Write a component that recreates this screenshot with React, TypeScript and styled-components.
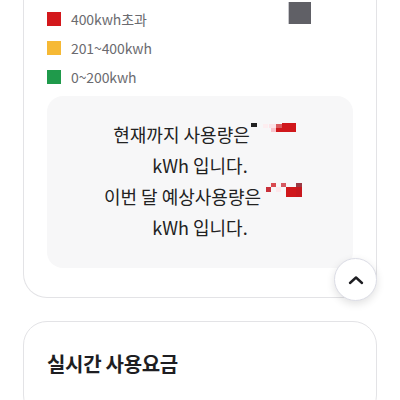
import React from "react";
import styled, { createGlobalStyle } from "styled-components";

const Global = createGlobalStyle`
  html, body { margin: 0; padding: 0; background: #fff; }
  body { font-family: "Noto Sans CJK KR", "Noto Sans", sans-serif; }
`;

const Page = styled.div`
  width: 400px;
  height: 400px;
  overflow: hidden;
  position: relative;
  background: #fff;
`;

const Card = styled.section<{ $top?: boolean }>`
  margin: 0 23px;
  box-sizing: border-box;
  border: 1px solid #e3e3e6;
  border-radius: 24px;
  background: #fff;
  position: relative;
  ${(p) =>
    p.$top
      ? `border-top: none; border-top-left-radius: 0; border-top-right-radius: 0; margin-top: -40px; padding: 49px 23px 29px;`
      : `margin-top: 23px; padding: 27px 23px 40px;`}
`;

const Legend = styled.ul`
  list-style: none;
  margin: 0;
  padding: 0;
  display: flex;
  flex-direction: column;
  gap: 9px;
`;

const LegendItem = styled.li`
  display: flex;
  align-items: center;
  gap: 10px;
  height: 20px;
  font-family: "Noto Sans CJK KR", sans-serif;
  font-size: 14px;
  color: #6b6b70;
  letter-spacing: -0.1px;
`;

const Swatch = styled.span<{ $c: string }>`
  width: 14px;
  height: 14px;
  background: ${(p) => p.$c};
`;

const GreySquare = styled.span`
  position: absolute;
  left: 264px;
  top: 42px;
  width: 22px;
  height: 22px;
  background: #606066;
  border-left: 1px solid #c8c8cc;
`;

const Info = styled.div`
  margin-top: 9px;
  background: #f7f7f8;
  border-radius: 16px;
  height: 172px;
  display: flex;
  flex-direction: column;
  align-items: center;
  justify-content: center;
  padding-bottom: 4px;
  box-sizing: border-box;
`;

const Line = styled.p<{ $indent?: number }>`
  margin: 0;
  height: 31px;
  display: flex;
  align-items: center;
  font-size: 18px;
  color: #222;
  white-space: nowrap;
  padding-left: ${(p) => p.$indent ?? 0}px;
`;

const TopButton = styled.button`
  position: absolute;
  right: -1px;
  bottom: -4px;
  width: 43px;
  height: 43px;
  border-radius: 50%;
  border: 1px solid #dcdde6;
  background: #fff;
  box-shadow: 0 3px 8px rgba(0, 0, 0, 0.12);
  display: flex;
  align-items: center;
  justify-content: center;
  padding: 0;
`;

const Title = styled.h2`
  margin: 0;
  font-size: 20px;
  font-weight: 700;
  color: #1e1e22;
  letter-spacing: -0.3px;
`;

const Blob1 = () => (
  <svg width="46" height="10" viewBox="0 0 46 10" style={{ marginLeft: 1, alignSelf: "flex-start", marginTop: 5 }}>
    <rect x="0" y="0" width="6" height="4" fill="#222" />
    <rect x="12" y="1" width="5" height="4" fill="#fdeef0" />
    <rect x="18" y="1" width="7" height="4" fill="#fde4e8" />
    <rect x="20" y="5" width="5" height="4" fill="#f9c4cc" />
    <rect x="25" y="1" width="6" height="4" fill="#d95a5e" />
    <rect x="31" y="0" width="14" height="9" fill="#d0181c" />
    <rect x="25" y="5" width="6" height="4" fill="#d0181c" />
  </svg>
);

const Blob2 = () => (
  <svg width="36" height="14" viewBox="0 0 36 14" style={{ marginLeft: 5, alignSelf: "flex-start", marginTop: 3 }}>
    <rect x="5" y="0" width="5" height="4" fill="#d94a50" />
    <rect x="0" y="4" width="5" height="5" fill="#c8303a" />
    <rect x="10" y="4" width="5" height="5" fill="#fde8ec" />
    <rect x="15" y="0" width="5" height="4" fill="#d65a62" />
    <rect x="20" y="4" width="10" height="10" fill="#d0181c" />
    <rect x="30" y="0" width="6" height="4" fill="#9c3a44" />
    <rect x="30" y="4" width="6" height="10" fill="#c8181e" />
  </svg>
);

export default function App() {
  return (
    <Page>
      <Global />
      <Card $top>
        <GreySquare />
        <Legend>
          <LegendItem>
            <Swatch $c="#d3181c" />
            400kwh초과
          </LegendItem>
          <LegendItem>
            <Swatch $c="#f6b935" />
            201~400kwh
          </LegendItem>
          <LegendItem>
            <Swatch $c="#1f9a4b" />
            0~200kwh
          </LegendItem>
        </Legend>
        <Info>
          <Line $indent={10}>
            현재까지 사용량은
            <Blob1 />
          </Line>
          <Line>kWh 입니다.</Line>
          <Line $indent={6}>
            이번 달 예상사용량은
            <Blob2 />
          </Line>
          <Line>kWh 입니다.</Line>
        </Info>
        <TopButton aria-label="맨 위로">
          <svg width="16" height="10" viewBox="0 0 16 10">
            <path d="M2 8 L8 2.5 L14 8" fill="none" stroke="#1e1e22" strokeWidth="2.4" strokeLinecap="round" strokeLinejoin="round" />
          </svg>
        </TopButton>
      </Card>
      <Card>
        <Title>실시간 사용요금</Title>
      </Card>
    </Page>
  );
}
